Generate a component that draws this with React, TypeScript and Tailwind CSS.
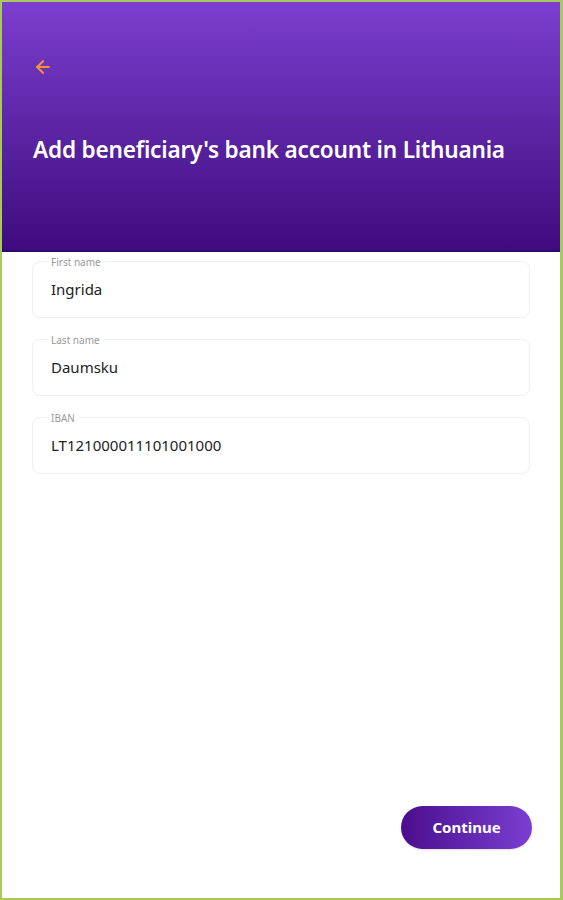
import { ArrowLeft } from 'lucide-react';

const font = { fontFamily: '"Noto Sans", "Open Sans", sans-serif' };

function Field({ label, value }: { label: string; value: string }) {
  return (
    <div className="relative h-[57px] rounded-[8px] border border-[#efeff2] flex items-center px-[18px]">
      <span className="absolute -top-[6px] left-[14px] bg-white px-[4px] text-[10px] leading-[12px] text-[#9a9a9a]">
        {label}
      </span>
      <span className="text-[15px] text-[#222]">{value}</span>
    </div>
  );
}

export default function App() {
  return (
    <div
      className="w-[563px] h-[900px] border-2 border-r-[3px] border-[#a9c95f] bg-white flex flex-col"
      style={font}
    >
      {/* header */}
      <div className="h-[250px] shrink-0 bg-gradient-to-b from-[#7c3ecf] to-[#3f0a7e] border-b-2 border-[#2c0b6b] px-[31px] pt-[55px]">
        <ArrowLeft className="w-[20px] h-[20px] text-[#f4913a]" strokeWidth={2.6} />
        <h1 className="mt-[56px] text-[22.6px] font-semibold text-white tracking-[-0.2px]">
          Add beneficiary's bank account in Lithuania
        </h1>
      </div>

      {/* form */}
      <div className="flex flex-col gap-[21px] px-[30px] pt-[9px]">
        <Field label="First name" value="Ingrida" />
        <Field label="Last name" value="Daumsku" />
        <Field label="IBAN" value="LT121000011101001000" />
      </div>

      <div className="flex-1" />

      <div className="flex justify-end px-[28px] pb-[49px]">
        <button className="w-[131px] h-[43px] rounded-full bg-gradient-to-r from-[#4a0c8c] to-[#7b3ed2] text-white text-[15px] font-bold shadow-sm">
          Continue
        </button>
      </div>
    </div>
  );
}
